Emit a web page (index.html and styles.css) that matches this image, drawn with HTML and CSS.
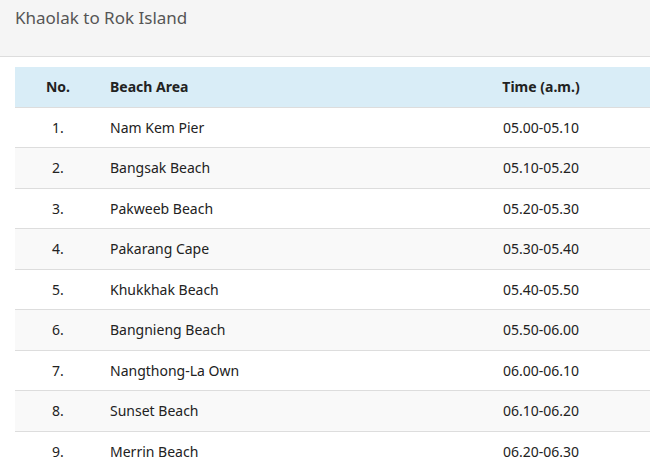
FILE: index.html
```html
<!DOCTYPE html>
<html>
<head>
<meta charset="utf-8">
<link rel="stylesheet" href="styles.css">
</head>
<body>
<div class="panel-heading">Khaolak to Rok Island</div>
<div class="panel-body">
<table class="schedule">
<thead>
<tr><th class="c-no">No.</th><th class="c-area">Beach Area</th><th class="c-time">Time (a.m.)</th></tr>
</thead>
<tbody>
<tr><td class="c-no">1.</td><td class="c-area">Nam Kem Pier</td><td class="c-time">05.00-05.10</td></tr>
<tr><td class="c-no">2.</td><td class="c-area">Bangsak Beach</td><td class="c-time">05.10-05.20</td></tr>
<tr><td class="c-no">3.</td><td class="c-area">Pakweeb Beach</td><td class="c-time">05.20-05.30</td></tr>
<tr><td class="c-no">4.</td><td class="c-area">Pakarang Cape</td><td class="c-time">05.30-05.40</td></tr>
<tr><td class="c-no">5.</td><td class="c-area">Khukkhak Beach</td><td class="c-time">05.40-05.50</td></tr>
<tr><td class="c-no">6.</td><td class="c-area">Bangnieng Beach</td><td class="c-time">05.50-06.00</td></tr>
<tr><td class="c-no">7.</td><td class="c-area">Nangthong-La Own</td><td class="c-time">06.00-06.10</td></tr>
<tr><td class="c-no">8.</td><td class="c-area">Sunset Beach</td><td class="c-time">06.10-06.20</td></tr>
<tr><td class="c-no">9.</td><td class="c-area">Merrin Beach</td><td class="c-time">06.20-06.30</td></tr>
</tbody>
</table>
</div>
</body>
</html>
```
FILE: styles.css
```css
html, body {
  margin: 0;
  padding: 0;
  background: #fff;
  overflow: hidden;
}
body {
  font-family: "Noto Sans", "Open Sans", sans-serif;
  color: #222;
  font-size: 14px;
}
.panel-heading {
  background: #f5f5f5;
  border-bottom: 1px solid #ddd;
  box-sizing: border-box;
  height: 57px;
  padding: 6px 15px 0;
  font-size: 17px;
  line-height: 24px;
  color: #555;
}
.panel-body {
  padding: 10px 0 0 15px;
}
.schedule {
  border-collapse: collapse;
  width: 100%;
  table-layout: fixed;
}
.schedule th {
  background: #d9edf7;
  font-weight: bold;
  height: 40px;
  padding: 0;
  border-bottom: 1px solid #ddd;
  box-sizing: border-box;
}
.schedule td {
  padding: 0;
  height: 40.5px;
  border-bottom: 1px solid #ddd;
  box-sizing: border-box;
}
.schedule tbody tr:nth-child(even) td {
  background: #f9f9f9;
}
.schedule .c-no {
  width: 86px;
  text-align: center;
}
.schedule .c-area {
  text-align: left;
  padding-left: 9px;
}
.schedule .c-time {
  width: 218px;
  text-align: center;
}
```
